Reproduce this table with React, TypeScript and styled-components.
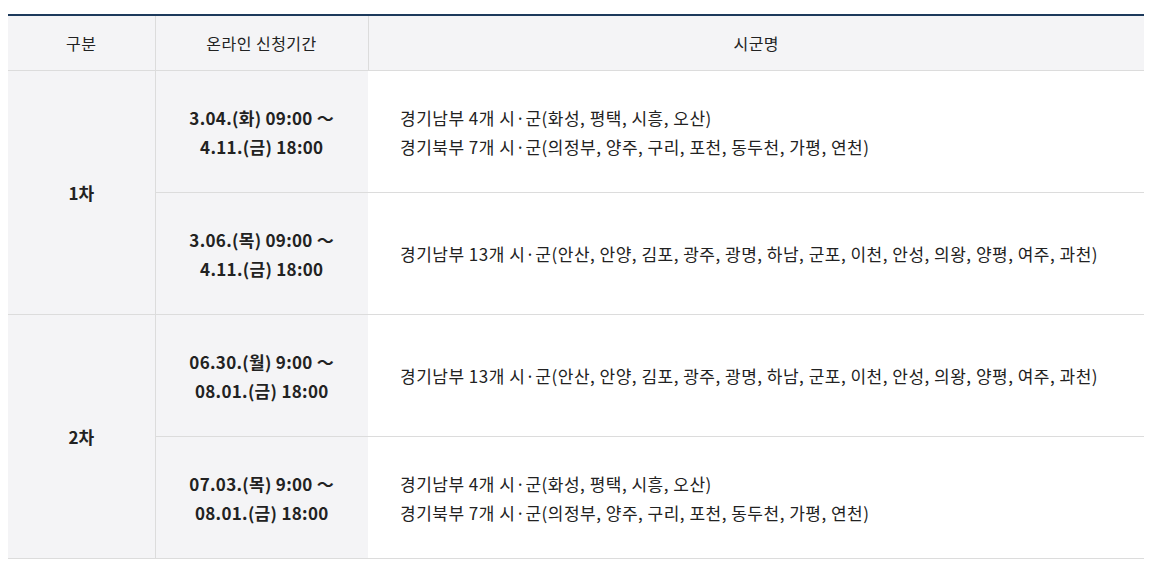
import styled, { createGlobalStyle } from 'styled-components';

const GlobalStyle = createGlobalStyle`
  html, body {
    margin: 0;
    padding: 0;
    background: #ffffff;
  }

  body {
    font-family: 'Noto Sans CJK KR', 'Noto Sans', sans-serif;
    color: #222222;
  }
`;

type Round = {
  name: string;
  slots: { start: string; end: string; cities: string[] }[];
};

const SOUTH_4 = '경기남부 4개 시·군(화성, 평택, 시흥, 오산)';
const NORTH_7 = '경기북부 7개 시·군(의정부, 양주, 구리, 포천, 동두천, 가평, 연천)';
const SOUTH_13 =
  '경기남부 13개 시·군(안산, 안양, 김포, 광주, 광명, 하남, 군포, 이천, 안성, 의왕, 양평, 여주, 과천)';

const rounds: Round[] = [
  {
    name: '1차',
    slots: [
      { start: '3.04.(화) 09:00 ～', end: '4.11.(금) 18:00', cities: [SOUTH_4, NORTH_7] },
      { start: '3.06.(목) 09:00 ～', end: '4.11.(금) 18:00', cities: [SOUTH_13] },
    ],
  },
  {
    name: '2차',
    slots: [
      { start: '06.30.(월) 9:00 ～', end: '08.01.(금) 18:00', cities: [SOUTH_13] },
      { start: '07.03.(목) 9:00 ～', end: '08.01.(금) 18:00', cities: [SOUTH_4, NORTH_7] },
    ],
  },
];

function App() {
  return (
    <>
      <GlobalStyle />
      <StyledWrapper>
        <ScheduleTable>
          <colgroup>
            <col style={{ width: 147 }} />
            <col style={{ width: 213 }} />
            <col />
          </colgroup>
          <thead>
            <tr>
              <HeadCell>구분</HeadCell>
              <HeadCell>온라인 신청기간</HeadCell>
              <HeadCell>시군명</HeadCell>
            </tr>
          </thead>
          <tbody>
            {rounds.map((round) =>
              round.slots.map((slot, i) => (
                <tr key={round.name + i}>
                  {i === 0 && (
                    <RoundCell rowSpan={round.slots.length}>{round.name}</RoundCell>
                  )}
                  <PeriodCell>
                    {slot.start}
                    <br />
                    {slot.end}
                  </PeriodCell>
                  <CityCell>
                    {slot.cities.map((c) => (
                      <div key={c}>{c}</div>
                    ))}
                  </CityCell>
                </tr>
              ))
            )}
          </tbody>
        </ScheduleTable>
      </StyledWrapper>
    </>
  );
}

export default App;

const StyledWrapper = styled.div`
  padding: 14px 10px 0 8px;
`;

const ScheduleTable = styled.table`
  width: 100%;
  border-collapse: collapse;
  table-layout: fixed;
  border-top: 2px solid #1d3a5c;
`;

const HeadCell = styled.th`
  height: 54px;
  padding: 0;
  background-color: #f4f4f6;
  border-bottom: 1px solid #dcdcdc;
  border-left: 1px solid #dcdcdc;
  font-size: 16px;
  font-weight: 400;
  letter-spacing: 0.5px;
  color: #222222;
  text-align: center;
  vertical-align: middle;

  &:first-child {
    border-left: none;
  }
`;

const RoundCell = styled.td`
  padding: 0;
  background-color: #f4f4f6;
  border-bottom: 1px solid #dcdcdc;
  font-size: 17px;
  font-weight: 700;
  text-align: center;
  vertical-align: middle;
`;

const PeriodCell = styled.td`
  height: 121px;
  padding: 0;
  background-color: #f4f4f6;
  border-bottom: 1px solid #dcdcdc;
  border-left: 1px solid #dcdcdc;
  font-size: 17px;
  font-weight: 700;
  line-height: 29px;
  letter-spacing: 0.3px;
  text-align: center;
  vertical-align: middle;
`;

const CityCell = styled.td`
  padding: 0 20px 0 32px;
  background-color: #ffffff;
  border-bottom: 1px solid #dcdcdc;
  font-size: 17px;
  line-height: 29px;
  letter-spacing: 0.5px;
  vertical-align: middle;
`;
